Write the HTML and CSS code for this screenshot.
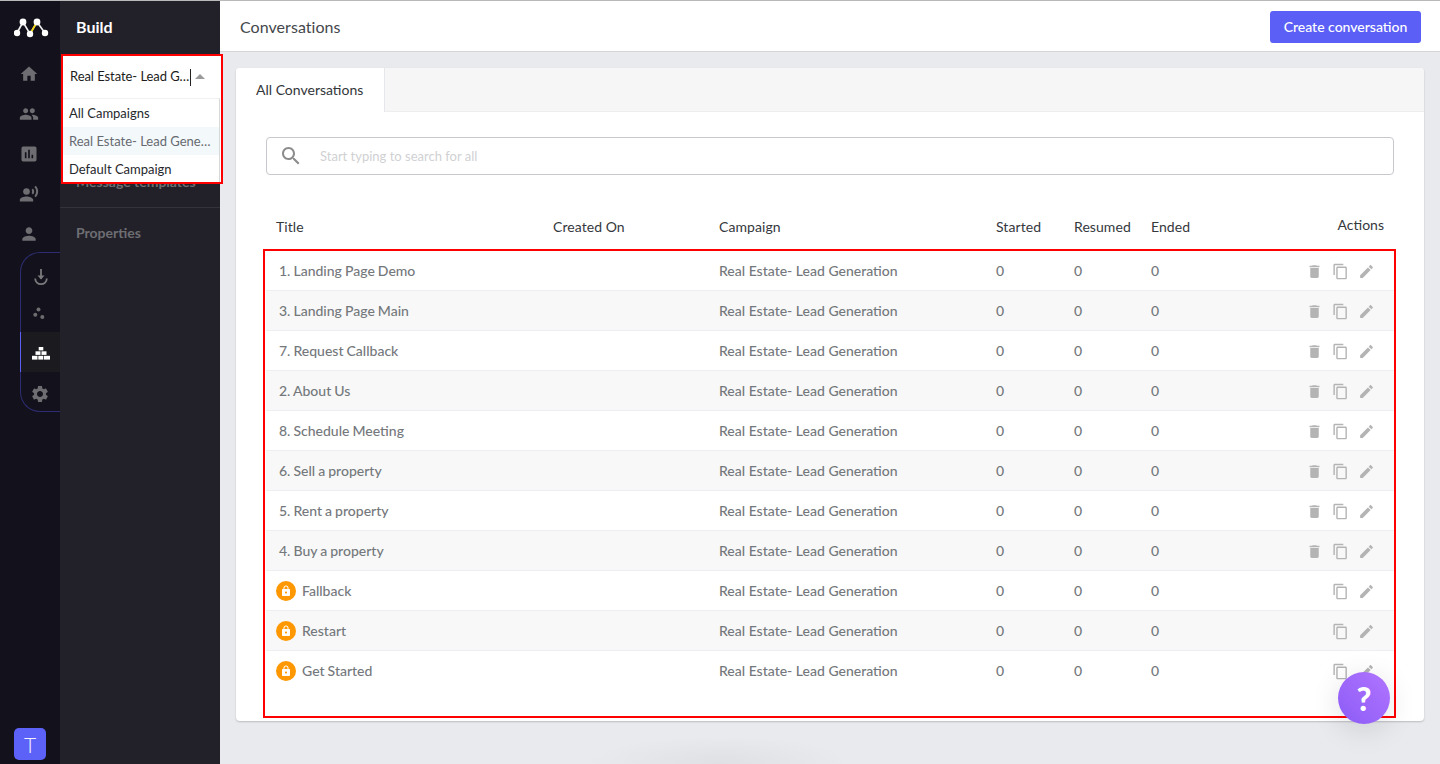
FILE: index.html
```html
<!DOCTYPE html>
<html lang="en">
<head>
<meta charset="utf-8">
<title>Conversations</title>
<link rel="stylesheet" href="styles.css">
</head>
<body>
<svg class="defs" aria-hidden="true">
  <symbol id="i-trash" viewBox="0 0 24 24"><path d="M6 19c0 1.1.9 2 2 2h8c1.1 0 2-.9 2-2V7H6v12zM19 4h-3.5l-1-1h-5l-1 1H5v2h14V4z"/></symbol>
  <symbol id="i-copy" viewBox="0 0 24 24"><path d="M16 1H4c-1.1 0-2 .9-2 2v14h2V3h12V1zm3 4H8c-1.1 0-2 .9-2 2v14c0 1.1.9 2 2 2h11c1.1 0 2-.9 2-2V7c0-1.1-.9-2-2-2zm0 16H8V7h11v14z"/></symbol>
  <symbol id="i-edit" viewBox="0 0 24 24"><path d="M3 17.25V21h3.75L17.81 9.94l-3.75-3.75L3 17.25zM20.71 7.04c.39-.39.39-1.02 0-1.41l-2.34-2.34c-.39-.39-1.02-.39-1.41 0l-1.83 1.83 3.75 3.75 1.83-1.83z"/></symbol>
  <symbol id="i-lock" viewBox="0 0 24 24"><path d="M18 8h-1V6c0-2.76-2.24-5-5-5S7 3.24 7 6v2H6c-1.1 0-2 .9-2 2v10c0 1.1.9 2 2 2h12c1.1 0 2-.9 2-2V10c0-1.1-.9-2-2-2zm-6 9c-1.1 0-2-.9-2-2s.9-2 2-2 2 .9 2 2-.9 2-2 2zm3.1-9H8.9V6c0-1.71 1.39-3.1 3.1-3.1s3.1 1.39 3.1 3.1v2z"/></symbol>
</svg>
<div class="app">
  <nav class="rail">
    <div class="logo">
      <svg width="36" height="24" viewBox="0 0 36 24">
        <path d="M3 17 9 6 16 18 23 6 31 17" fill="none" stroke="#f2f2f2" stroke-width="1.6"/>
        <path d="M17.500 15.500 21.500 8.500" fill="none" stroke="#f5d90a" stroke-width="1.6"/>
        <circle cx="3" cy="17" r="3.200" fill="#fff"/><circle cx="9" cy="6" r="3.400" fill="#fff"/><circle cx="16" cy="18" r="3.200" fill="#fff"/><circle cx="23" cy="6" r="3.400" fill="#fff"/><circle cx="31" cy="17" r="3.200" fill="#fff"/>
      </svg>
    </div>
    <a class="rail-item"><svg class="rail-icon" viewBox="0 0 24 24"><path d="M10 20v-6h4v6h5v-8h3L12 3 2 12h3v8z"/></svg></a>
    <a class="rail-item"><svg class="rail-icon" viewBox="0 0 24 24"><path d="M16 11c1.66 0 2.99-1.34 2.99-3S17.66 5 16 5c-1.66 0-3 1.34-3 3s1.34 3 3 3zm-8 0c1.66 0 2.99-1.34 2.99-3S9.66 5 8 5C6.34 5 5 6.34 5 8s1.34 3 3 3zm0 2c-2.33 0-7 1.17-7 3.5V19h14v-2.5c0-2.33-4.67-3.5-7-3.5zm8 0c-.29 0-.62.02-.97.05 1.16.84 1.97 1.97 1.97 3.45V19h6v-2.500c0-2.33-4.67-3.5-7-3.5z"/></svg></a>
    <a class="rail-item"><svg class="rail-icon" viewBox="0 0 24 24"><path d="M19 3H5c-1.1 0-2 .9-2 2v14c0 1.1.9 2 2 2h14c1.1 0 2-.9 2-2V5c0-1.1-.9-2-2-2zM9 17H7v-7h2v7zm4 0h-2V7h2v10zm4 0h-2v-4h2v4z"/></svg></a>
    <a class="rail-item"><svg class="rail-icon" viewBox="0 0 24 24"><circle cx="9" cy="9" r="4"/><path d="M9 15c-2.67 0-8 1.34-8 4v2h16v-2c0-2.66-5.33-4-8-4zm7.76-9.64l-1.68 1.69c.84 1.18.84 2.71 0 3.89l1.68 1.69c2.02-2.02 2.02-5.07 0-7.27zM20.07 2l-1.63 1.63c2.77 3.02 2.77 7.56 0 10.74L20.07 16c3.9-3.89 3.91-9.95 0-14z"/></svg></a>
    <a class="rail-item"><svg class="rail-icon" viewBox="0 0 24 24"><path d="M12 12c2.21 0 4-1.79 4-4s-1.79-4-4-4-4 1.79-4 4 1.79 4 4 4zm0 2c-2.67 0-8 1.34-8 4v2h16v-2c0-2.66-5.33-4-8-4z"/></svg></a>
    <div class="rail-group">
      <a class="group-item"><svg width="18" height="20" viewBox="0 0 18 20" class="shift-dl"><path d="M10 1v10" stroke="#7a7a7c" stroke-width="1.800" fill="none"/><path d="M6.500 7.500 10 11.500l3.500-4z" fill="#7a7a7c"/><path d="M4.200 10.500c0 3.300 2.600 5.700 5.800 5.700s5.800-2.400 5.800-5.700" stroke="#7a7a7c" stroke-width="1.800" fill="none"/></svg></a>
      <a class="group-item"><svg width="14" height="14" viewBox="0 0 14 14" class="shift-dots"><circle cx="6.500" cy="2.500" r="2" fill="#6d6d70"/><circle cx="3.300" cy="7.700" r="2" fill="#6d6d70"/><circle cx="10.300" cy="10" r="2" fill="#6d6d70"/></svg></a>
      <a class="group-item is-active"><svg width="18" height="13" viewBox="0 0 18 13" class="shift-pyr"><rect x="6.700" y="0" width="4.600" height="3.400" fill="#fff"/><rect x="3.500" y="4.300" width="5" height="3.600" fill="#fff"/><rect x="9.500" y="4.300" width="5" height="3.600" fill="#fff"/><rect x="0" y="8.800" width="5.500" height="3.800" fill="#fff"/><rect x="6.300" y="8.800" width="5" height="3.800" fill="#fff"/><rect x="12" y="8.800" width="6" height="3.800" fill="#fff"/></svg></a>
      <a class="group-item"><svg class="rail-icon shift-gear" viewBox="0 0 24 24"><path d="M19.14 12.94c.04-.3.06-.61.06-.94 0-.32-.02-.64-.07-.94l2.03-1.58c.18-.14.23-.41.12-.61l-1.92-3.32c-.12-.22-.37-.29-.59-.22l-2.39.96c-.5-.38-1.03-.7-1.62-.94l-.36-2.54c-.04-.24-.24-.41-.48-.41h-3.84c-.24 0-.43.17-.47.41l-.36 2.54c-.59.24-1.13.57-1.62.94l-2.39-.96c-.22-.08-.47 0-.59.22L2.74 8.870c-.12.21-.08.47.12.61l2.03 1.58c-.05.3-.09.63-.09.94s.02.64.07.94l-2.03 1.58c-.18.14-.23.41-.12.61l1.92 3.32c.12.22.37.29.59.22l2.39-.96c.5.38 1.03.7 1.62.94l.36 2.54c.05.24.24.41.48.41h3.84c.24 0 .44-.17.47-.41l.36-2.54c.59-.24 1.13-.56 1.62-.94l2.39.96c.22.08.47 0 .59-.22l1.92-3.32c.12-.22.07-.47-.12-.61l-2.01-1.58zM12 15.600c-1.98 0-3.6-1.62-3.6-3.6s1.62-3.6 3.6-3.6 3.6 1.62 3.6 3.6-1.62 3.6-3.6 3.6z"/></svg></a>
    </div>
    <div class="avatar">T</div>
  </nav>

  <aside class="side">
    <div class="side-title">Build</div>
    <div class="side-item side-first">Message templates</div>
    <div class="side-item side-last">Properties</div>
    <div class="campaign-box">
      <div class="campaign-select">
        <span class="campaign-value">Real Estate- Lead Generation</span>
        <span class="campaign-cursor"></span>
        <span class="campaign-caret"></span>
      </div>
      <ul class="campaign-menu">
        <li class="campaign-option">All Campaigns</li>
        <li class="campaign-option is-selected">Real Estate- Lead Generation</li>
        <li class="campaign-option">Default Campaign</li>
      </ul>
    </div>
  </aside>

  <div class="content">
    <header class="topbar">
      <h1 class="page-title">Conversations</h1>
      <button class="primary">Create conversation</button>
    </header>
    <main class="main">
      <section class="card">
        <div class="tabs"><div class="tab">All Conversations</div></div>
        <div class="search">
          <svg class="search-icon" viewBox="0 0 24 24"><path d="M15.500 14h-.79l-.28-.27C15.410 12.590 16 11.110 16 9.500 16 5.910 13.090 3 9.500 3S3 5.910 3 9.500 5.910 16 9.500 16c1.610 0 3.090-.59 4.230-1.570l.27.28v.79l5 4.990L20.490 19l-4.990-5zm-6 0C7.010 14 5 11.990 5 9.500S7.010 5 9.500 5 14 7.010 14 9.500 11.990 14 9.500 14z"/></svg>
          <span class="search-placeholder">Start typing to search for all</span>
        </div>
        <div class="thead">
          <span>Title</span><span>Created On</span><span>Campaign</span><span>Started</span><span>Resumed</span><span>Ended</span><span class="th-actions">Actions</span>
        </div>
        <div class="tbody">
          <div class="row"><span class="title">1. Landing Page Demo</span><span></span><span>Real Estate- Lead Generation</span><span>0</span><span>0</span><span>0</span><span class="actions"><svg class="act"><use href="#i-trash"/></svg><svg class="act"><use href="#i-copy"/></svg><svg class="act"><use href="#i-edit"/></svg></span></div>
          <div class="row"><span class="title">3. Landing Page Main</span><span></span><span>Real Estate- Lead Generation</span><span>0</span><span>0</span><span>0</span><span class="actions"><svg class="act"><use href="#i-trash"/></svg><svg class="act"><use href="#i-copy"/></svg><svg class="act"><use href="#i-edit"/></svg></span></div>
          <div class="row"><span class="title">7. Request Callback</span><span></span><span>Real Estate- Lead Generation</span><span>0</span><span>0</span><span>0</span><span class="actions"><svg class="act"><use href="#i-trash"/></svg><svg class="act"><use href="#i-copy"/></svg><svg class="act"><use href="#i-edit"/></svg></span></div>
          <div class="row"><span class="title">2. About Us</span><span></span><span>Real Estate- Lead Generation</span><span>0</span><span>0</span><span>0</span><span class="actions"><svg class="act"><use href="#i-trash"/></svg><svg class="act"><use href="#i-copy"/></svg><svg class="act"><use href="#i-edit"/></svg></span></div>
          <div class="row"><span class="title">8. Schedule Meeting</span><span></span><span>Real Estate- Lead Generation</span><span>0</span><span>0</span><span>0</span><span class="actions"><svg class="act"><use href="#i-trash"/></svg><svg class="act"><use href="#i-copy"/></svg><svg class="act"><use href="#i-edit"/></svg></span></div>
          <div class="row"><span class="title">6. Sell a property</span><span></span><span>Real Estate- Lead Generation</span><span>0</span><span>0</span><span>0</span><span class="actions"><svg class="act"><use href="#i-trash"/></svg><svg class="act"><use href="#i-copy"/></svg><svg class="act"><use href="#i-edit"/></svg></span></div>
          <div class="row"><span class="title">5. Rent a property</span><span></span><span>Real Estate- Lead Generation</span><span>0</span><span>0</span><span>0</span><span class="actions"><svg class="act"><use href="#i-trash"/></svg><svg class="act"><use href="#i-copy"/></svg><svg class="act"><use href="#i-edit"/></svg></span></div>
          <div class="row"><span class="title">4. Buy a property</span><span></span><span>Real Estate- Lead Generation</span><span>0</span><span>0</span><span>0</span><span class="actions"><svg class="act"><use href="#i-trash"/></svg><svg class="act"><use href="#i-copy"/></svg><svg class="act"><use href="#i-edit"/></svg></span></div>
          <div class="row"><span class="title title-locked"><i class="lock"><svg class="lock-icon"><use href="#i-lock"/></svg></i>Fallback</span><span></span><span>Real Estate- Lead Generation</span><span>0</span><span>0</span><span>0</span><span class="actions"><svg class="act"><use href="#i-copy"/></svg><svg class="act"><use href="#i-edit"/></svg></span></div>
          <div class="row"><span class="title title-locked"><i class="lock"><svg class="lock-icon"><use href="#i-lock"/></svg></i>Restart</span><span></span><span>Real Estate- Lead Generation</span><span>0</span><span>0</span><span>0</span><span class="actions"><svg class="act"><use href="#i-copy"/></svg><svg class="act"><use href="#i-edit"/></svg></span></div>
          <div class="row"><span class="title title-locked"><i class="lock"><svg class="lock-icon"><use href="#i-lock"/></svg></i>Get Started</span><span></span><span>Real Estate- Lead Generation</span><span>0</span><span>0</span><span>0</span><span class="actions"><svg class="act"><use href="#i-copy"/></svg><svg class="act"><use href="#i-edit"/></svg></span></div>
        </div>
        <div class="annotation"></div>
      </section>
    </main>
    <button class="help">?</button>
  </div>
</div>
</body>
</html>
```
FILE: styles.css
```css
* { box-sizing: border-box; }
html, body { margin: 0; height: 100%; overflow: hidden; }
body { font-family: Lato, "Liberation Sans", sans-serif; font-size: 14px; color: #3f4347; border-top: 1px solid #b9b9b9; }
.defs { display: none; }
.app { display: flex; height: 763px; }

.rail { width: 60px; flex: none; background: #13121c; display: flex; flex-direction: column; align-items: center; position: relative; z-index: 1; }
.logo { height: 53px; width: 60px; display: flex; align-items: center; justify-content: center; padding: 1px 0 0 4px; }
.rail-item { height: 40px; width: 60px; display: flex; align-items: center; justify-content: center; padding-right: 2px; }
.rail-icon { width: 20px; height: 20px; fill: #6e6e72; }
.rail-group { margin-top: -2px; margin-left: 20px; width: 40px; height: 160px; border: 1px solid #2d2c72; border-right: 0; border-radius: 20px 0 0 20px; }
.group-item { height: 40px; display: flex; align-items: center; justify-content: center; margin-left: -1px; }
.group-item:first-child { height: 39px; }
.group-item:last-child { height: 39px; }
.group-item.is-active { background: #1b1b1f; border-left: 1px solid #5a5ff6; }
.group-item.is-active svg { margin-left: 1px; }
.shift-dl { transform: translate(0, 5px); }
.shift-dots { transform: translate(-1px, 2px); }
.shift-pyr { transform: translateY(1px); }
.shift-gear { transform: translateY(2px); }
.avatar { margin-top: auto; margin-bottom: 4px; width: 32px; height: 32px; border-radius: 5px; background: #5c62f7; color: #f1f0ff; font-size: 21px; font-weight: 300; display: flex; align-items: center; justify-content: center; }

.side { width: 160px; flex: none; background: #22212a; position: relative; z-index: 2; }
.side-title { height: 51px; padding-left: 16px; color: #fff; font-size: 16px; font-weight: 700; line-height: 52px; }
.side-item { color: #6e6e72; font-size: 14px; font-weight: 700; padding-left: 16px; }
.side-first { margin-top: 120px; height: 36px; line-height: 20px; border-bottom: 1px solid #33333a; }
.side-last { height: 52px; line-height: 50px; }
.campaign-box { position: absolute; left: 1px; top: 53px; width: 162px; height: 130px; border: 2px solid #ff0000; background: #fff; }
.campaign-select { height: 42px; padding: 0 0 3px 7px; display: flex; align-items: center; color: #1c1c20; font-size: 13px; letter-spacing: -0.06px; }
.campaign-value { width: 120px; white-space: nowrap; overflow: hidden; text-overflow: ellipsis; }
.campaign-cursor { width: 1px; height: 17px; margin: 3px 0 0 0; background: #222; }
.campaign-caret { margin: 2px 0 0 4px; width: 0; height: 0; border-left: 5px solid transparent; border-right: 5px solid transparent; border-bottom: 5px solid #9a9a9a; }
.campaign-menu { list-style: none; margin: 0; padding: 0; width: 157px; border-right: 1px solid #d8d8d8; height: 84px; border-top: 1px solid #f0f0f0; }
.campaign-option { height: 28px; line-height: 28px; padding: 0 6px; white-space: nowrap; overflow: hidden; text-overflow: ellipsis; color: #26282c; font-size: 13px; }
.campaign-option.is-selected { background: #f3f8fb; color: #666a70; }

.content { flex: 1; min-width: 0; position: relative; background: radial-gradient(ellipse 130px 28px at 500px 100%, #dfe0e3, rgba(223,224,227,0)) #e9eaee; }
.topbar { height: 51px; background: #fff; border-bottom: 1px solid #d5d5d7; display: flex; align-items: center; justify-content: space-between; padding: 1px 19px 0 20px; }
.page-title { margin: 0; font-size: 16px; font-weight: 400; color: #44474b; letter-spacing: 0.05px; }
.primary { width: 151px; height: 32px; border: 0; border-radius: 3px; background: #5b5ff5; color: #fff; font-family: Lato, "Liberation Sans", sans-serif; font-size: 14px; font-weight: 500; padding: 0; }
.main { padding: 16px 16px 0; }
.card { position: relative; height: 653px; background: #fff; border-radius: 4px; box-shadow: 0 1px 2px rgba(0,0,0,.2); }
.tabs { height: 44px; background: #f6f6f7; border-bottom: 1px solid #eceef0; border-radius: 4px 4px 0 0; }
.tab { width: 149px; height: 44px; background: #fff; border-right: 1px solid #e6e7ea; padding-left: 20px; line-height: 44px; font-size: 14px; color: #33363a; border-radius: 4px 0 0 0; }
.search { margin: 25px 30px 0; height: 38px; border: 1px solid #c9c6cd; border-radius: 4px; display: flex; align-items: center; padding-left: 12px; }
.search-icon { width: 24px; height: 24px; fill: #8c8c8c; flex: none; }
.search-placeholder { margin-left: 17px; color: #d0d1d3; font-size: 13px; }
.thead, .row { display: grid; grid-template-columns: 277px 166px 277px 78px 77px 1fr auto; align-items: center; margin: 0 30px; padding-left: 10px; }
.thead { height: 48px; margin-top: 28px; padding-bottom: 2px; color: #35383d; font-size: 14px; letter-spacing: 0.07px; }
.th-actions { padding: 0 10px 4px 0; letter-spacing: 0; }
.row { height: 40px; border-bottom: 1px solid #eceef1; color: #74787c; font-size: 14px; font-weight: 500; }
.row:nth-child(even) { background: #f8f8f8; }
.row:last-child { border-bottom-color: transparent; }
.title { padding-left: 3px; word-spacing: -0.5px; }
.title-locked { padding-left: 0; display: flex; align-items: center; gap: 6px; }
.lock { width: 20px; height: 20px; border-radius: 50%; background: #ff9800; display: flex; align-items: center; justify-content: center; }
.lock-icon { width: 12px; height: 12px; fill: #fff; }
.actions { display: flex; justify-content: flex-end; gap: 9px; padding: 1px 19px 0 0; }
.act { width: 17px; height: 17px; fill: #b4b4b4; }
.annotation { position: absolute; left: 27px; top: 181px; width: 1133px; height: 469px; border: 2px solid #ff0000; pointer-events: none; }
.help { position: absolute; left: 1118px; top: 671px; width: 52px; height: 52px; border: 0; border-radius: 50%; background: linear-gradient(45deg, #8c5cf6, #b174ff); color: #fff; font-family: Lato, "Liberation Sans", sans-serif; font-size: 32px; font-weight: 900; padding: 0; box-shadow: 0 6px 30px rgba(0,0,0,.12); }
```
